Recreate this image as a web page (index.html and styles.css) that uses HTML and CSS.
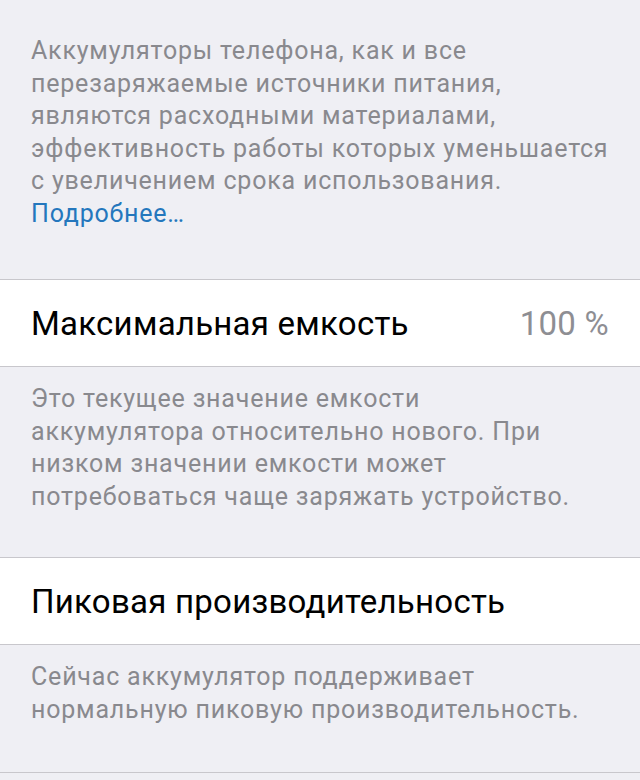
FILE: index.html
```html
<!DOCTYPE html>
<html lang="ru">
<head>
<meta charset="utf-8">
<title>Состояние аккумулятора</title>
<link rel="stylesheet" href="styles.css">
</head>
<body>
  <main class="settings">
    <p class="note note--top">Аккумуляторы телефона, как и все перезаряжаемые источники питания, являются расходными материалами, эффективность работы которых уменьшается с увеличением срока использования. <a class="link" href="#">Подробнее…</a></p>

    <div class="cell">
      <span class="cell-title">Максимальная емкость</span>
      <span class="cell-value">100 %</span>
    </div>
    <p class="note">Это текущее значение емкости<br>аккумулятора относительно нового. При<br>низком значении емкости может<br>потребоваться чаще заряжать устройство.</p>

    <div class="cell">
      <span class="cell-title">Пиковая производительность</span>
    </div>
    <p class="note note--last">Сейчас аккумулятор поддерживает нормальную пиковую производительность.</p>
  </main>
</body>
</html>
```

FILE: styles.css
```css
html, body {
  margin: 0;
  padding: 0;
  background: #efeff4;
}

body {
  font-family: Roboto, "Noto Sans", sans-serif;
  -webkit-font-smoothing: antialiased;
}

.settings {
  display: flex;
  flex-direction: column;
  height: 780px;
}

.note {
  margin: 0;
  padding: 16px 26px 44px 31px;
  font-size: 25px;
  line-height: 32.5px;
  color: #89898e;
  letter-spacing: 0.8px;
  white-space: nowrap;
}

.note--top {
  padding-top: 35px;
  padding-bottom: 49px;
  white-space: normal;
}

.note--last {
  padding-bottom: 46px;
  border-bottom: 1px solid #c8c7cc;
  white-space: normal;
}

.link {
  display: block;
  color: #2477bd;
  text-decoration: none;
}

.cell {
  display: flex;
  align-items: center;
  justify-content: space-between;
  height: 86px;
  padding: 0 31px;
  background: #ffffff;
  border-top: 1px solid #c8c7cc;
  border-bottom: 1px solid #c8c7cc;
  font-size: 33px;
  letter-spacing: 0.25px;
}

.cell-title {
  color: #000000;
}

.cell-value {
  color: #8e8e93;
}
```
